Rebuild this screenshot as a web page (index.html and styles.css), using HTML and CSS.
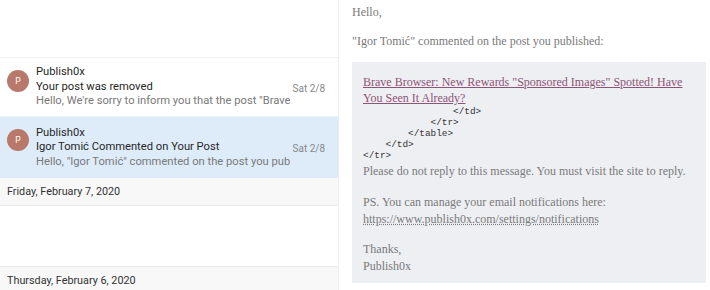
FILE: index.html
```html
<!DOCTYPE html>
<html>
<head>
<meta charset="utf-8">
<link rel="stylesheet" href="styles.css">
</head>
<body>
<div class="app">
  <div class="list">
    <div class="list-top"></div>
    <div class="item">
      <div class="avatar">P</div>
      <div class="main">
        <div class="sender">Publish0x</div>
        <div class="subject">Your post was removed</div>
        <div class="preview">Hello, We're sorry to inform you that the post "Brave Browser: New Rewards</div>
      </div>
      <div class="date">Sat 2/8</div>
    </div>
    <div class="item selected">
      <div class="avatar">P</div>
      <div class="main">
        <div class="sender">Publish0x</div>
        <div class="subject">Igor Tomić Commented on Your Post</div>
        <div class="preview">Hello, "Igor Tomić" commented on the post you published:</div>
      </div>
      <div class="date">Sat 2/8</div>
    </div>
    <div class="group">Friday, February 7, 2020</div>
    <div class="gap"></div>
    <div class="group">Thursday, February 6, 2020</div>
  </div>
  <div class="reader">
    <p class="para">Hello,</p>
    <p class="para">"Igor Tomić" commented on the post you published:</p>
    <div class="box">
      <div class="title"><a class="link" href="#">Brave Browser: New Rewards "Sponsored Images" Spotted! Have You Seen It Already?</a></div>
      <pre class="code">                &lt;/td&gt;
            &lt;/tr&gt;
        &lt;/table&gt;
    &lt;/td&gt;
&lt;/tr&gt;</pre>
      <p class="note">Please do not reply to this message. You must visit the site to reply.</p>
      <p class="note ps">PS. You can manage your email notifications here:<br><span class="url">https://www.publish0x.com/settings/notifications</span></p>
      <p class="note thanks">Thanks,<br>Publish0x</p>
    </div>
  </div>
</div>
</body>
</html>
```
FILE: styles.css
```css
html, body {
  margin: 0;
  padding: 0;
  background: #fff;
}
.app {
  display: flex;
  width: 710px;
  height: 290px;
  overflow: hidden;
}
.list {
  width: 338px;
  flex: none;
  border-right: 1px solid #ececec;
  font-family: Roboto, "Noto Sans", sans-serif;
  font-size: 11.2px;
  color: #262626;
}
.list-top {
  height: 57px;
  border-bottom: 1px solid #f0f0f0;
}
.item {
  display: flex;
  align-items: center;
  height: 59px;
  box-sizing: border-box;
  padding: 0 13px 0 7px;
  border-bottom: 1px solid #e8f0f8;
}
.item.selected {
  background: #deecf9;
  height: 61px;
  border-bottom: none;
}
.avatar {
  align-self: flex-start;
  margin-top: 12px;
  width: 22px;
  height: 22px;
  border-radius: 50%;
  background: #b8796a;
  color: #fff;
  font-size: 8.5px;
  line-height: 22px;
  text-align: center;
  flex: none;
}
.main {
  margin-left: 7px;
  width: 254px;
  overflow: hidden;
  white-space: nowrap;
  line-height: 14.5px;
}
.preview {
  color: #797979;
}
.date {
  margin-left: auto;
  font-size: 10px;
  color: #888;
  margin-top: 2px;
}
.group {
  height: 28px;
  box-sizing: border-box;
  background: #f8f8f8;
  border-bottom: 1px solid #ececec;
  padding: 0 7px;
  line-height: 27px;
  font-size: 10.8px;
  color: #333;
}
.gap {
  height: 60px;
  border-bottom: 1px solid #ececec;
}
.reader {
  flex: 1;
  padding: 4px 4px 0 13px;
  font-family: "Liberation Serif", serif;
  font-size: 12px;
  color: #7a7a7a;
}
.para {
  margin: 0 0 12px;
  line-height: 17px;
}
.box {
  background: #eeeff3;
  padding: 12px 10px 8px 11px;
  line-height: 17px;
}
.title {
  line-height: 16px;
}
.link {
  color: #8d5475;
  text-decoration: underline;
}
.code {
  margin: 0 0 2px;
  font-family: "Liberation Mono", monospace;
  font-size: 9.4px;
  line-height: 11px;
  color: #333;
}
.note {
  margin: 0;
}
.note.ps {
  margin-top: 14px;
}
.note.thanks {
  margin-top: 13px;
}
.url {
  text-decoration: underline dotted;
}
```
